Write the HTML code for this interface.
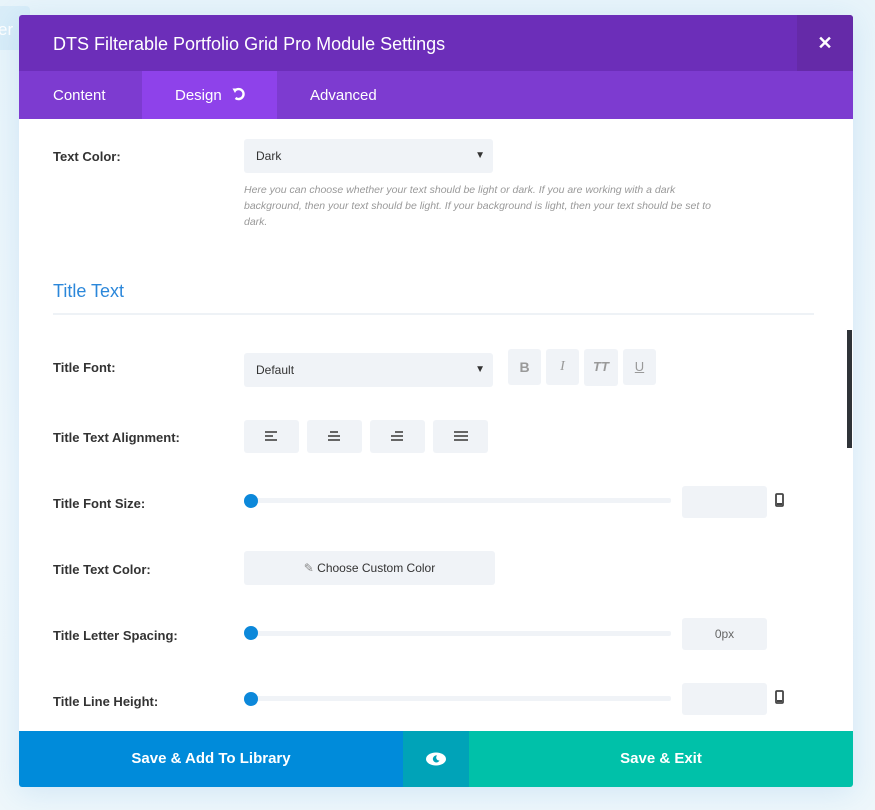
<!DOCTYPE html>
<html><head><meta charset="utf-8"><style>
*{margin:0;padding:0;box-sizing:border-box}
body{width:875px;height:810px;overflow:hidden;background:linear-gradient(180deg,#e8f4fa 0%,#f1f8fc 60%,#eef7fb 100%);font-family:"Liberation Sans",sans-serif;position:relative}
.a{position:absolute}
.bgbtn{left:-10px;top:6px;width:40px;height:44px;background:#d9edf8;border-radius:4px}
.bgbtn span{position:absolute;left:8px;top:14px;color:#fff;font-size:17px}
.modal{left:19px;top:15px;width:834px;height:772px;background:#fff;border-radius:3px;overflow:hidden;box-shadow:0 5px 30px rgba(43,135,218,.15)}
.hdr{left:0;top:0;width:834px;height:56px;background:#6c2eb9;color:#fff;font-size:18px;padding:19px 0 0 34px}
.close{left:778px;top:0;width:56px;height:56px;background:#652aa8;color:#fff;font-size:18px;font-weight:bold;text-align:center;line-height:56px}
.tabs{left:0;top:56px;width:834px;height:48px;background:#7d3bd0;color:#fff;font-size:15px}
.tab{position:absolute;top:0;height:48px;line-height:50px}
.lbl{left:34px;font-size:13px;font-weight:bold;color:#333}
.sel{background:#f0f3f7;border-radius:3px;font-size:12px;color:#333;padding-left:12px;line-height:34px}
.sel b{position:absolute;right:8px;top:0;font-size:10px}
.btn{background:#f0f3f7;border-radius:3px}
.track{height:5px;background:#f0f3f7;border-radius:2px}
.knob{width:14px;height:14px;border-radius:50%;background:#0c88da}
.inp{width:85px;height:32px;background:#f0f3f7;border-radius:3px;font-size:12px;color:#666;text-align:center;line-height:32px}
.ft{top:716px;height:56px;color:#fff;font-weight:bold;font-size:15px;text-align:center;line-height:56px}
.line{height:2px;background:#666}
</style></head><body>
<div class="a bgbtn"><span>er</span></div>
<div class="a modal">
 <div class="a hdr">DTS Filterable Portfolio Grid Pro Module Settings</div>
 <div class="a close">✕</div>
 <div class="a tabs">
  <div class="tab" style="left:0;width:123px;padding-left:34px">Content</div>
  <div class="tab" style="left:123px;width:135px;background:#8e42ea;padding-left:33px">Design <svg width="14" height="14" viewBox="0 0 14 14" style="margin-left:6px;vertical-align:-1px"><path d="M3 3.5A5 5 0 1 1 3.5 11" fill="none" stroke="#fff" stroke-width="2.4"/><path d="M0.5 1.5L5.5 1.5L3 6Z" fill="#fff"/></svg></div>
  <div class="tab" style="left:291px">Advanced</div>
 </div>

 <div class="a lbl" style="top:134px">Text Color:</div>
 <div class="a sel" style="left:225px;top:124px;width:249px;height:34px">Dark<b>▼</b></div>
 <div class="a" style="left:225px;top:167px;width:480px;font-size:10.5px;font-style:italic;color:#999;line-height:16px">Here you can choose whether your text should be light or dark. If you are working with a dark background, then your text should be light. If your background is light, then your text should be set to dark.</div>

 <div class="a" style="left:34px;top:266px;font-size:18px;color:#2b87da">Title Text</div>
 <div class="a" style="left:34px;top:298px;width:761px;height:2px;background:#eef2f6"></div>

 <div class="a lbl" style="top:345px">Title Font:</div>
 <div class="a sel" style="left:225px;top:338px;width:249px;height:34px">Default<b>▼</b></div>
 <div class="a btn" style="left:489px;top:334px;width:33px;height:36px;font-weight:bold;color:#999;font-size:14px;text-align:center;line-height:36px">B</div>
 <div class="a btn" style="left:527px;top:334px;width:33px;height:36px;font-style:italic;color:#999;font-size:14px;text-align:center;line-height:36px;font-family:'Liberation Serif',serif">I</div>
 <div class="a btn" style="left:565px;top:334px;width:34px;height:37px;font-style:italic;color:#999;font-size:13px;text-align:center;line-height:36px;font-weight:bold">TT</div>
 <div class="a btn" style="left:604px;top:334px;width:33px;height:36px;color:#999;font-size:13px;text-align:center;line-height:36px;text-decoration:underline">U</div>

 <div class="a lbl" style="top:415px">Title Text Alignment:</div>
 <div class="a btn" style="left:225px;top:405px;width:55px;height:33px"><div class="a" style="left:21px;top:11px"><div class="line" style="width:12px"></div><div class="line" style="width:8px;margin-top:2px"></div><div class="line" style="width:12px;margin-top:2px"></div></div></div>
 <div class="a btn" style="left:288px;top:405px;width:55px;height:33px"><div class="a" style="left:21px;top:11px"><div class="line" style="width:8px;margin-left:2px"></div><div class="line" style="width:12px;margin-top:2px"></div><div class="line" style="width:12px;margin-top:2px"></div></div></div>
 <div class="a btn" style="left:351px;top:405px;width:55px;height:33px"><div class="a" style="left:21px;top:11px"><div class="line" style="width:8px;margin-left:4px"></div><div class="line" style="width:12px;margin-top:2px"></div><div class="line" style="width:12px;margin-top:2px"></div></div></div>
 <div class="a btn" style="left:414px;top:405px;width:55px;height:33px"><div class="a" style="left:21px;top:11px"><div class="line" style="width:14px"></div><div class="line" style="width:14px;margin-top:2px"></div><div class="line" style="width:14px;margin-top:2px"></div></div></div>

 <div class="a lbl" style="top:481px">Title Font Size:</div>
 <div class="a track" style="left:227px;top:483px;width:425px"></div>
 <div class="a knob" style="left:225px;top:479px"></div>
 <div class="a inp" style="left:663px;top:471px"></div>
 <svg class="a" style="left:756px;top:478px" width="9" height="14"><rect x="1" y="1" width="7" height="12" rx="1" fill="none" stroke="#444" stroke-width="1.8"/><rect x="2" y="10" width="5" height="2" fill="#444"/></svg>

 <div class="a lbl" style="top:547px">Title Text Color:</div>
 <div class="a btn" style="left:225px;top:536px;width:251px;height:34px;font-size:12px;color:#333;text-align:center;line-height:34px"><span style="color:#888">✎</span> Choose Custom Color</div>

 <div class="a lbl" style="top:613px">Title Letter Spacing:</div>
 <div class="a track" style="left:227px;top:616px;width:425px"></div>
 <div class="a knob" style="left:225px;top:611px"></div>
 <div class="a inp" style="left:663px;top:603px">0px</div>

 <div class="a lbl" style="top:679px">Title Line Height:</div>
 <div class="a track" style="left:227px;top:681px;width:425px"></div>
 <div class="a knob" style="left:225px;top:677px"></div>
 <div class="a inp" style="left:663px;top:668px"></div>
 <svg class="a" style="left:756px;top:675px" width="9" height="14"><rect x="1" y="1" width="7" height="12" rx="1" fill="none" stroke="#444" stroke-width="1.8"/><rect x="2" y="10" width="5" height="2" fill="#444"/></svg>

 <div class="a" style="left:828px;top:315px;width:5px;height:118px;background:#2f3338"></div>

 <div class="a ft" style="left:0;width:384px;background:#008bda">Save &amp; Add To Library</div>
 <div class="a ft" style="left:384px;width:66px;background:#00a3b8"><svg width="22" height="14" viewBox="0 0 22 14" style="vertical-align:middle"><ellipse cx="11" cy="7" rx="10" ry="6.5" fill="#fff"/><path d="M12 3.5A3.5 3.5 0 1 0 14.5 8.5A3 3 0 0 1 12 3.5Z" fill="#00a3b8"/></svg></div>
 <div class="a ft" style="left:450px;width:384px;background:#00c1a9">Save &amp; Exit</div>
</div>
</body></html>
